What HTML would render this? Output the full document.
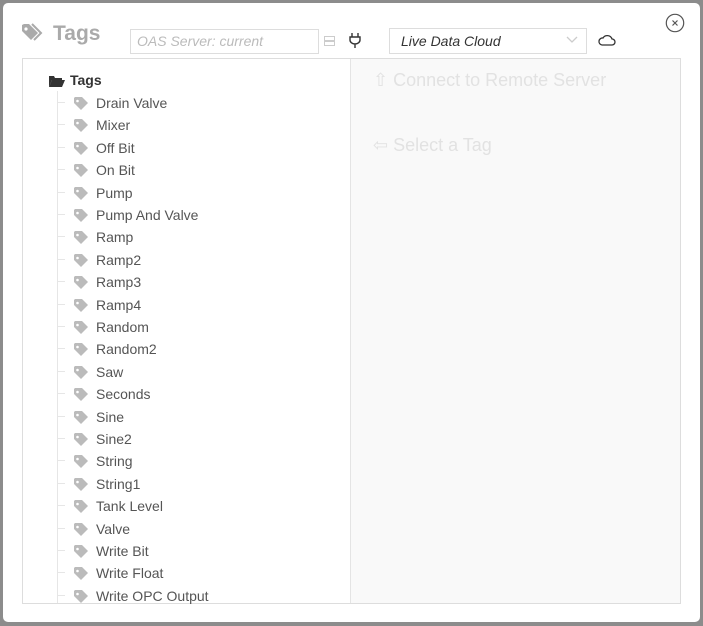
<!DOCTYPE html><html><head><style>
body{margin:0;width:703px;height:626px;background:#8c8c8c;font-family:"Liberation Sans",sans-serif;position:relative;overflow:hidden}
.p{position:absolute;left:3px;top:3px;width:697px;height:619px;background:#fff;border-radius:5px}
.a{position:absolute}
.box{position:absolute;left:22px;top:58px;width:657px;height:544px;border:1px solid #ddd}
.rp{position:absolute;left:327px;top:0;width:329px;height:544px;background:#f9f9f9;border-left:1px solid #e4e4e4}
.it{position:absolute;left:73px;height:22px;font-size:14px;color:#555;line-height:22px;white-space:nowrap}
.it svg{vertical-align:-2px;margin-right:7px}
.tk{position:absolute;left:34px;width:8px;height:1px;background:#e6e6e6}
</style></head><body><div class="p"></div>
<svg class="a" style="left:21px;top:23px" width="22" height="20" viewBox="0 0 22 20"><path d="M1 2v6l9 9 7-7-9-9H3z" fill="#aaa"/><circle cx="5" cy="6" r="1.6" fill="#fff"/><path d="M11 1l9 9-7 7" stroke="#aaa" stroke-width="2" fill="none"/></svg>
<div class="a" style="left:53px;top:22px;font-size:21px;font-weight:bold;color:#aaa">Tags</div>
<div class="a" style="left:130px;top:29px;width:187px;height:23px;border:1px solid #ddd;font-size:14px;font-style:italic;color:#bbb;line-height:23px;text-indent:6px">OAS Server: current</div>
<svg class="a" style="left:324px;top:35px" width="12" height="12"><rect x="0.5" y="1.5" width="10" height="4" fill="none" stroke="#ccc"/><rect x="0.5" y="6.5" width="10" height="4" fill="none" stroke="#ccc"/></svg>
<svg class="a" style="left:348px;top:32px" width="14" height="16"><path d="M4 1v4M10 1v4M2 5h10v3a5 4 0 0 1-10 0zM7 12v4" stroke="#333" stroke-width="1.4" fill="none"/></svg>
<div class="a" style="left:389px;top:28px;width:196px;height:24px;border:1px solid #ddd;font-size:14px;font-style:italic;color:#333;line-height:24px;text-indent:11px">Live Data Cloud</div>
<svg class="a" style="left:566px;top:36px" width="12" height="8"><path d="M1 1l5 5 5-5" stroke="#ccc" stroke-width="1.3" fill="none"/></svg>
<svg class="a" style="left:597px;top:33px" width="19" height="14"><path d="M5 12h10a3 3 0 0 0 0-6 5 5 0 0 0-9-1 3.5 3.5 0 0 0-1 7z" stroke="#333" stroke-width="1.3" fill="none"/></svg>
<svg class="a" style="left:665px;top:13px" width="20" height="20"><circle cx="10" cy="10" r="8.7" stroke="#555" stroke-width="1.2" fill="none"/><path d="M7.5 7.5l5 5M12.5 7.5l-5 5" stroke="#555" stroke-width="1.2"/></svg>
<div class="box">
<div class="rp">
<div class="a" style="left:22px;top:11px;font-size:18px;color:#e2e2e2;white-space:nowrap">⇧ Connect to Remote Server</div>
<div class="a" style="left:22px;top:76px;font-size:18px;color:#e2e2e2;white-space:nowrap">⇦ Select a Tag</div>
</div>
<svg class="a" style="left:25px;top:15px" width="18" height="14"><path d="M1 2h5l1 2h7v2H4L1 13z" fill="#333"/><path d="M4 6h13l-3 7H1z" fill="#333"/></svg>
<div class="a" style="left:47px;top:13px;font-size:14px;font-weight:bold;color:#333">Tags</div>
<div class="a" style="left:34px;top:32px;width:1px;height:512px;background:#e6e6e6"></div>
<div id="l"></div>
</div>
<script>
var n=["Drain Valve","Mixer","Off Bit","On Bit","Pump","Pump And Valve","Ramp","Ramp2","Ramp3","Ramp4","Random","Random2","Saw","Seconds","Sine","Sine2","String","String1","Tank Level","Valve","Write Bit","Write Float","Write OPC Output"],h="";
n.forEach(function(t,i){var y=33+i*22.4;h+='<div class="tk" style="top:'+(y+10)+'px"></div><div class="it" style="left:51px;top:'+y+'px"><svg width="15" height="13" viewBox="0 0 15 13"><path d="M0 1v5l7 7 7-7-6-6H1z" fill="#bbb"/><circle cx="3.5" cy="4" r="1.3" fill="#fff"/></svg>'+t+'</div>'});
document.getElementById("l").innerHTML=h;
</script>
</body></html>
